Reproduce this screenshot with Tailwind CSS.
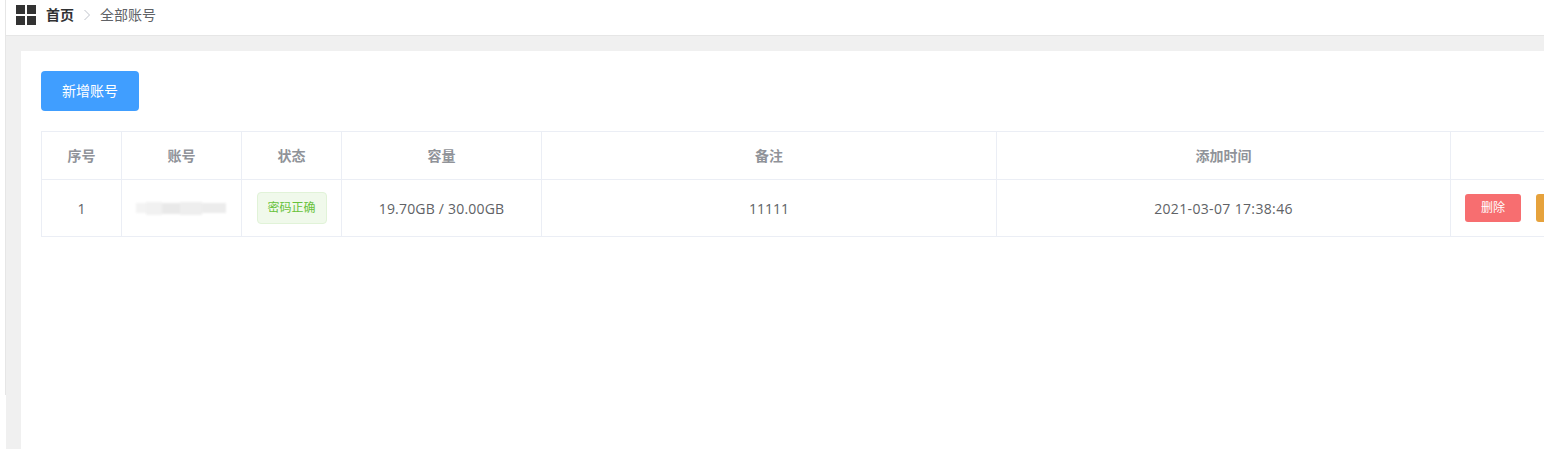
<!DOCTYPE html>
<html lang="zh-CN">
<head>
  <meta charset="UTF-8">
  <title>全部账号</title>
  <script src="https://cdn.jsdelivr.net/npm/@tailwindcss/browser@4"></script>
</head>
<body class="bg-white overflow-hidden font-['Open_Sans','Noto_Sans_CJK_SC',sans-serif]">
<div class="flex h-[449px] w-[1544px] overflow-hidden">
  <!-- sidebar remnant -->
  <div class="w-[6px] shrink-0">
    <div class="h-[395px] border-r border-[#e6e6e6]"></div>
  </div>

  <div class="flex-1 min-w-0 flex flex-col">
    <!-- breadcrumb -->
    <div class="h-[36px] shrink-0 flex items-center pl-[10px] border-b border-[#e6e6e6] bg-white">
      <div class="grid grid-cols-2 gap-[2px] w-[20px] h-[20px] mb-[6px] mr-[10px]">
        <span class="bg-[#333333]"></span><span class="bg-[#333333]"></span>
        <span class="bg-[#333333]"></span><span class="bg-[#333333]"></span>
      </div>
      <div class="flex items-center h-full pb-[6px] text-[14px]">
        <span class="font-bold text-[#303133]">首页</span>
        <svg class="mx-[9px]" width="8" height="12" viewBox="0 0 8 12" fill="none"><path d="M1.5 1 L6.5 6 L1.5 11" stroke="#c0c4cc" stroke-width="1"/></svg>
        <span class="text-[#606266]">全部账号</span>
      </div>
    </div>

    <!-- content -->
    <div class="flex-1 bg-[#f0f0f0] pl-[15px] pt-[15px] overflow-hidden">
      <div class="bg-white h-full w-[1600px] pl-[20px] pt-[20px]">
        <button class="w-[98px] h-[40px] rounded bg-[#409eff] text-white text-sm">新增账号</button>

        <table class="mt-[20px] w-[1580px] table-fixed border-collapse text-[14px] text-[#606266]">
          <colgroup>
            <col class="w-[80px]"><col class="w-[120px]"><col class="w-[100px]"><col class="w-[200px]"><col class="w-[455px]"><col class="w-[454px]"><col>
          </colgroup>
          <thead>
            <tr class="h-[48px] text-[14px] font-bold text-[#909399] text-center">
              <th class="border border-[#ebeef5]">序号</th>
              <th class="border border-[#ebeef5]">账号</th>
              <th class="border border-[#ebeef5]">状态</th>
              <th class="border border-[#ebeef5]">容量</th>
              <th class="border border-[#ebeef5]">备注</th>
              <th class="border border-[#ebeef5]">添加时间</th>
              <th class="border border-[#ebeef5]"></th>
            </tr>
          </thead>
          <tbody>
            <tr class="h-[57px] text-center">
              <td class="border border-[#ebeef5]">1</td>
              <td class="border border-[#ebeef5]">
                <div class="flex items-center justify-center h-[15px] pr-[2px] blur-[1px]">
                  <div class="w-[10px] h-[10px] bg-[#f3f3f3]"></div>
                  <div class="w-[16px] h-[13px] bg-[#f1f1f1]"></div>
                  <div class="w-[18px] h-[11px] bg-[#e9e9e9]"></div>
                  <div class="w-[22px] h-[13px] bg-[#eeeeee]"></div>
                  <div class="w-[24px] h-[10px] bg-[#ececec]"></div>
                </div>
              </td>
              <td class="border border-[#ebeef5]">
                <span class="inline-flex items-center justify-center w-[70px] h-[32px] rounded border border-[#e1f3d8] bg-[#f0f9eb] text-[#67c23a] text-[12px]">密码正确</span>
              </td>
              <td class="border border-[#ebeef5] tracking-[0.2px]">19.70GB / 30.00GB</td>
              <td class="border border-[#ebeef5]">11111</td>
              <td class="border border-[#ebeef5] tracking-[0.35px]">2021-03-07 17:38:46</td>
              <td class="border border-[#ebeef5] text-left pl-[14px]">
                <div class="flex gap-[15px]">
                  <button class="w-[56px] h-[28px] rounded-[3px] bg-[#f76e70] text-white text-[12px]">删除</button>
                  <button class="w-[56px] h-[28px] rounded-[3px] bg-[#e6a23c]"></button>
                </div>
              </td>
            </tr>
          </tbody>
        </table>
      </div>
    </div>
  </div>
</div>
</body>
</html>
